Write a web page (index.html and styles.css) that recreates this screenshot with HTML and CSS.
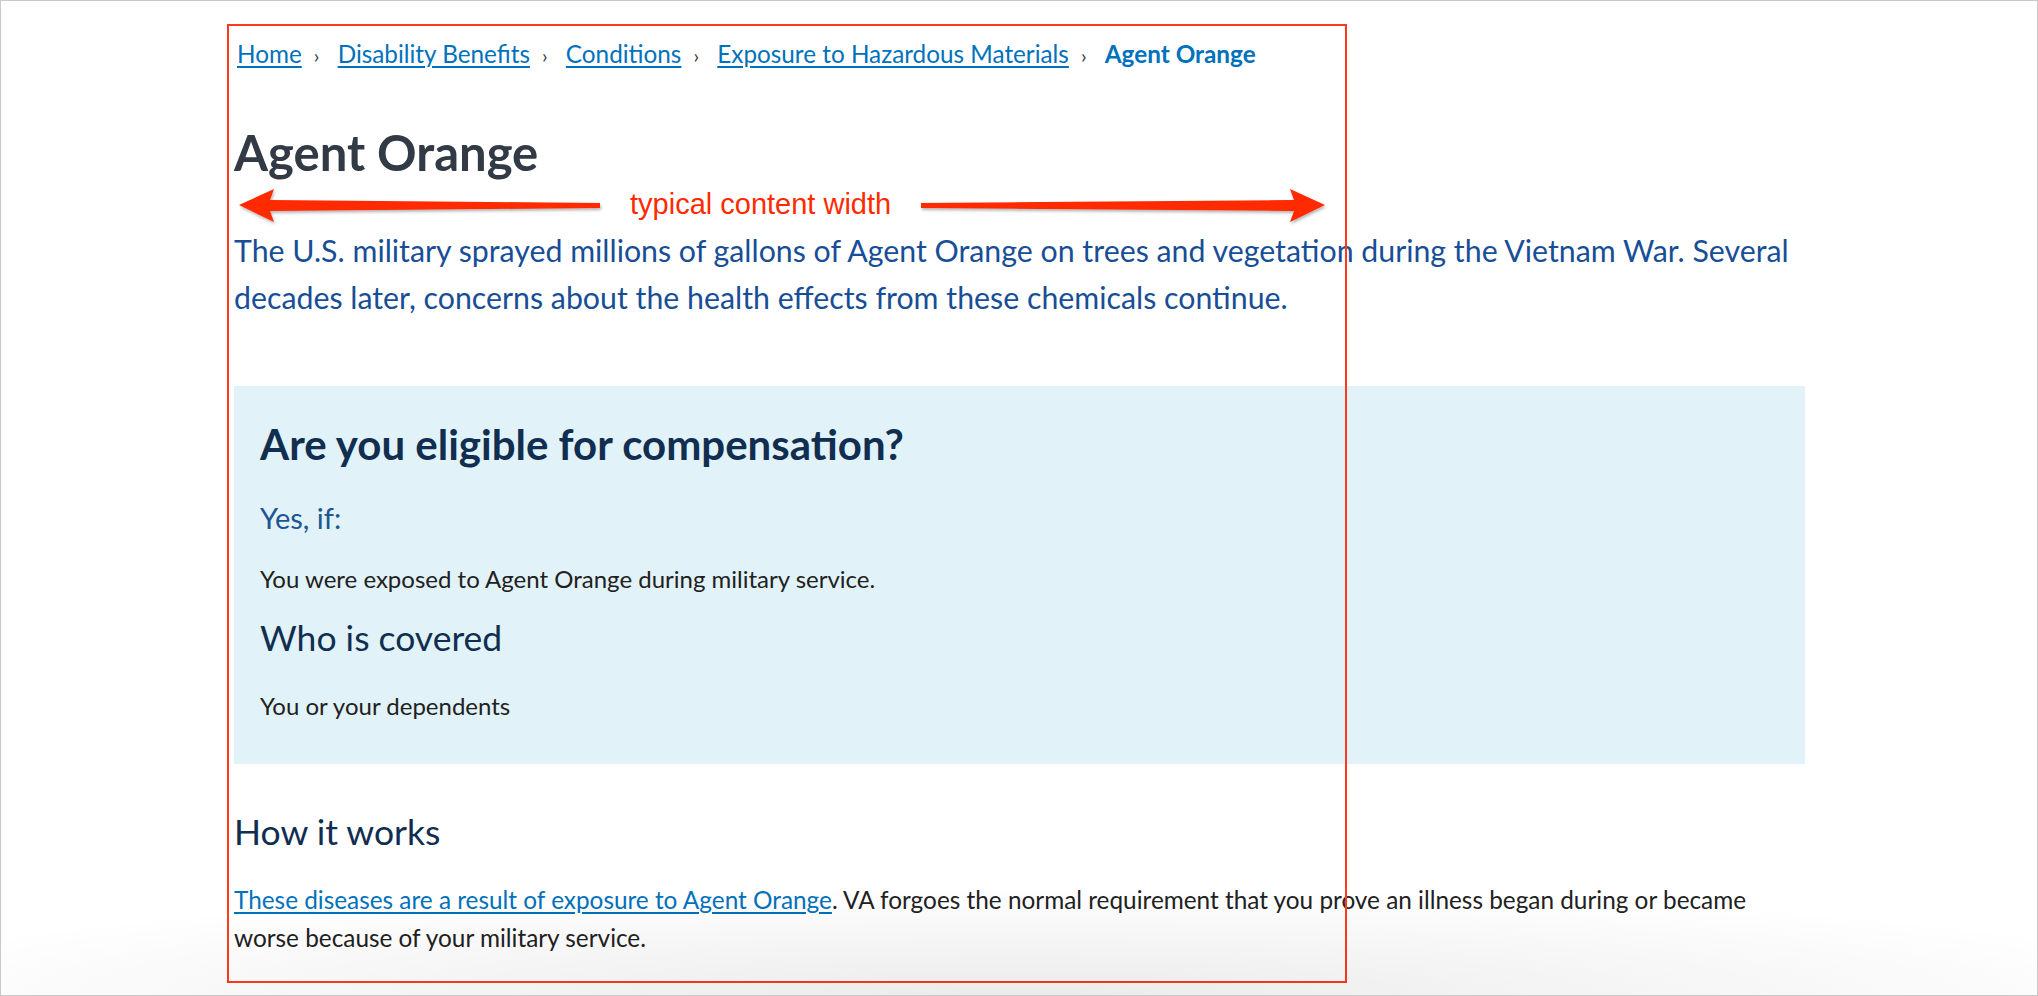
FILE: index.html
```html
<!DOCTYPE html>
<html lang="en">
<head>
<meta charset="utf-8">
<title>Agent Orange</title>
<link rel="stylesheet" href="styles.css">
</head>
<body>
<div class="frame">
  <main class="page">
    <nav class="crumbs">
      <a href="#">Home</a><span class="sep">›</span>
      <a href="#">Disability Benefits</a><span class="sep">›</span>
      <a href="#">Conditions</a><span class="sep">›</span>
      <a href="#">Exposure to Hazardous Materials</a><span class="sep">›</span>
      <a href="#" class="current">Agent Orange</a>
    </nav>
    <h1 class="title">Agent Orange</h1>
    <p class="lead">The U.S. military sprayed millions of gallons of Agent Orange on trees and vegetation during the Vietnam War. Several decades later, concerns about the health effects from these chemicals continue.</p>
    <section class="eligible">
      <h2 class="eligible-title">Are you eligible for compensation?</h2>
      <h3 class="yes">Yes, if:</h3>
      <p class="body">You were exposed to Agent Orange during military service.</p>
      <h3 class="sub">Who is covered</h3>
      <p class="body">You or your dependents</p>
    </section>
    <h3 class="sub how">How it works</h3>
    <p class="body para"><a href="#" class="inline-link">These diseases are a result of exposure to Agent Orange</a>. VA forgoes the normal requirement that you prove an illness began during or became worse because of your military service.</p>
  </main>

  <div class="annot-box"></div>
  <div class="annot-width">
    <svg class="arrow" width="1100" height="50" viewBox="0 0 1100 50">
      <defs>
        <filter id="sh" x="-5%" y="-50%" width="110%" height="200%">
          <feDropShadow dx="1" dy="2" stdDeviation="1.5" flood-color="#000" flood-opacity="0.3"/>
        </filter>
      </defs>
      <g fill="#ff2a00" filter="url(#sh)">
        <polygon points="2,24 37,8 33,19 363,22 363,27 33,30 37,41"/>
        <polygon points="1088,24 1053,8 1057,19 684,22 684,27 1057,30 1053,41"/>
      </g>
    </svg>
    <span class="annot-label">typical content width</span>
  </div>
  <div class="bottom-fade"></div>
</div>
</body>
</html>
```

FILE: styles.css
```css
* { box-sizing: border-box; }

html, body {
  margin: 0;
  padding: 0;
  background: #ffffff;
}

.frame {
  position: relative;
  width: 2038px;
  height: 996px;
  border: 1px solid #c9c9c9;
  overflow: hidden;
  font-family: Lato, "Open Sans", sans-serif;
}

.page {
  width: 1804px;
  padding: 38px 0 0 233px;
}

.crumbs {
  font-size: 24.3px;
  line-height: 30px;
  color: #0071bb;
  padding-left: 3px;
}

.crumbs a {
  color: #0071bb;
  text-decoration: underline;
  text-underline-offset: 3px;
}

.crumbs .sep {
  display: inline-block;
  margin: 0 12px;
  color: #323a45;
  font-size: 20px;
}

.crumbs .current {
  font-weight: 700;
  text-decoration: none;
}

.title {
  margin: 53px 0 0;
  font-size: 49px;
  line-height: 58px;
  font-weight: 700;
  color: #323a45;
}

.lead {
  margin: 46px 0 0;
  font-size: 30.3px;
  line-height: 47px;
  color: #174e96;
}

.eligible {
  margin-top: 65px;
  background: #e1f3f8;
  padding: 35px 26px 39px;
}

.eligible-title {
  margin: 0;
  font-size: 42px;
  line-height: 46px;
  font-weight: 700;
  color: #112e51;
}

.yes {
  margin: 33px 0 0;
  font-size: 29px;
  line-height: 36px;
  font-weight: 400;
  color: #205493;
}

.body {
  margin: 24px 0 0;
  font-size: 24px;
  line-height: 38px;
  color: #212121;
}

.sub {
  margin: 18px 0 0;
  font-size: 35.5px;
  line-height: 44px;
  font-weight: 400;
  color: #112e51;
}

.eligible .sub + .body { margin-top: 27px; }

.how { margin-top: 46px; }

.para {
  margin-top: 27px;
  font-size: 24.35px;
}

.inline-link {
  color: #0071bb;
  text-decoration: underline;
  text-underline-offset: 3px;
}

/* annotation overlays */
.annot-box {
  position: absolute;
  left: 226px;
  top: 23px;
  width: 1120px;
  height: 959px;
  border: 2px solid #ff3a1c;
  pointer-events: none;
}

.annot-width {
  position: absolute;
  left: 236px;
  top: 180px;
  width: 1100px;
  height: 50px;
}

.arrow { display: block; }

.annot-label {
  position: absolute;
  left: 393px;
  top: 6px;
  font-family: "Liberation Sans", Arial, sans-serif;
  font-size: 29px;
  line-height: 34px;
  color: #ff2a00;
}

.bottom-fade {
  position: absolute;
  left: 0;
  right: 0;
  bottom: 0;
  height: 110px;
  background: radial-gradient(ellipse 60% 100% at 50% 100%, rgba(0,0,0,0.08), rgba(0,0,0,0) 100%);
  pointer-events: none;
}
```
